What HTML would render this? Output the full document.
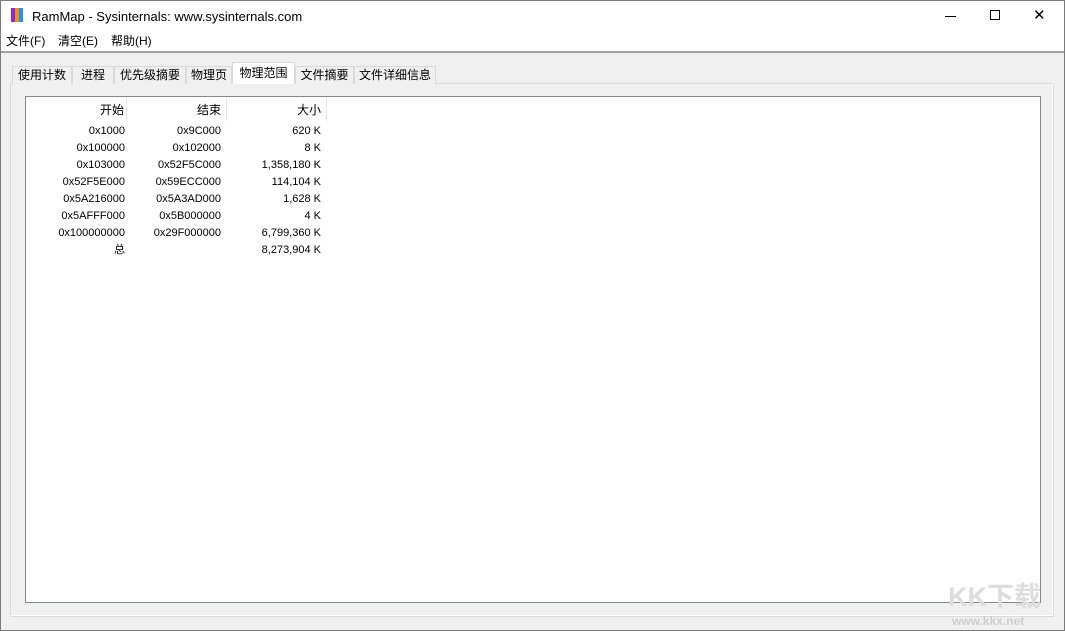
<!DOCTYPE html><html><head><style>
*{margin:0;padding:0;box-sizing:border-box}
body{width:1065px;height:631px;overflow:hidden;background:#f0f0f0;font-family:"Liberation Sans","Noto Sans CJK SC",sans-serif;font-size:12px;color:#000;position:relative}
.a{position:absolute}
.tab{position:absolute;top:66px;height:18px;border:1px solid #d9d9d9;border-bottom:none;background:#f0f0f0;text-align:center;line-height:16px;font-size:12px}
.r{position:absolute;text-align:right;font-size:11px;height:17px;line-height:17px}
</style></head><body>
<div class="a" style="left:0;top:0;width:1065px;height:631px;border:1px solid #7a7a7a"></div>
<div class="a" style="left:1px;top:1px;width:1063px;height:51px;background:#fff"></div>
<div class="a" style="left:1px;top:51px;width:1063px;height:2px;background:#a0a0a0"></div>
<div class="a" style="left:11px;top:8px;width:4px;height:14px;background:#8a2be2"></div>
<div class="a" style="left:15px;top:8px;width:4px;height:14px;background:#ff8c00"></div>
<div class="a" style="left:19px;top:8px;width:4px;height:14px;background:#1e90ff"></div>
<div class="a" style="left:32px;top:9px;font-size:13px">RamMap - Sysinternals: www.sysinternals.com</div>
<div class="a" style="left:945px;top:16px;width:11px;height:1px;background:#000"></div>
<div class="a" style="left:990px;top:10px;width:10px;height:10px;border:1px solid #000"></div>
<div class="a" style="left:1033px;top:6px;font-size:15px">✕</div>
<div class="a" style="left:6px;top:32px;font-size:12px">文件(F)</div>
<div class="a" style="left:58px;top:32px">清空(E)</div>
<div class="a" style="left:111px;top:32px">帮助(H)</div>
<div class="a" style="left:10px;top:83px;width:1043px;height:533px;border:1px solid #d9d9d9;border-right-color:#fff;border-bottom-color:#fff;box-shadow:1px 1px 0 #d9d9d9"></div>
<div class="tab" style="left:12px;width:60px">使用计数</div>
<div class="tab" style="left:72px;width:42px">进程</div>
<div class="tab" style="left:114px;width:72px">优先级摘要</div>
<div class="tab" style="left:186px;width:46px">物理页</div>
<div class="tab" style="left:232px;top:62px;height:22px;width:63px;background:#fff;line-height:20px">物理范围</div>
<div class="tab" style="left:295px;width:59px">文件摘要</div>
<div class="tab" style="left:354px;width:82px">文件详细信息</div>
<div class="a" style="left:25px;top:96px;width:1016px;height:507px;background:#fff;border:1px solid #828790"></div>
<div class="a" style="left:126px;top:98px;width:1px;height:23px;background:#e5e5e5"></div>
<div class="a" style="left:226px;top:98px;width:1px;height:23px;background:#e5e5e5"></div>
<div class="a" style="left:326px;top:98px;width:1px;height:23px;background:#e5e5e5"></div>
<div class="r" style="left:30px;width:94px;top:102px;font-size:12px">开始</div>
<div class="r" style="left:130px;width:91px;top:102px;font-size:12px">结束</div>
<div class="r" style="left:230px;width:91px;top:102px;font-size:12px">大小</div>
<div class="r" style="left:30px;width:95px;top:123px">0x1000<br>0x100000<br>0x103000<br>0x52F5E000<br>0x5A216000<br>0x5AFFF000<br>0x100000000<br>总</div>
<div class="r" style="left:130px;width:91px;top:123px">0x9C000<br>0x102000<br>0x52F5C000<br>0x59ECC000<br>0x5A3AD000<br>0x5B000000<br>0x29F000000</div>
<div class="r" style="left:230px;width:91px;top:123px">620 K<br>8 K<br>1,358,180 K<br>114,104 K<br>1,628 K<br>4 K<br>6,799,360 K<br>8,273,904 K</div>
<div class="a" style="left:948px;top:575px;font-size:27px;font-weight:bold;color:#ddd">KK下载</div>
<div class="a" style="left:952px;top:614px;font-size:12px;font-weight:bold;color:#ccc">www.kkx.net</div>
</body></html>
